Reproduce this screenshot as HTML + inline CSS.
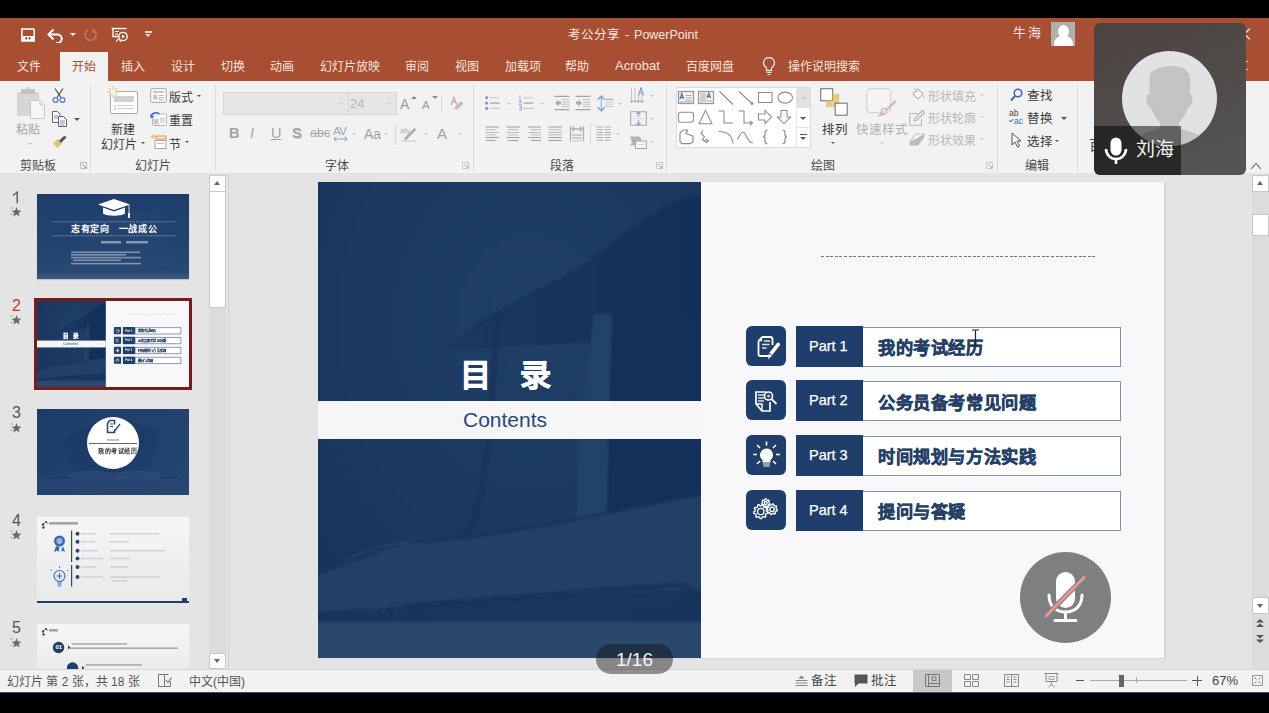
<!DOCTYPE html>
<html lang="zh-CN">
<head>
<meta charset="utf-8">
<style>
*{margin:0;padding:0;box-sizing:border-box}
html,body{width:1269px;height:713px;overflow:hidden;background:#000}
body{position:relative;font-family:"Liberation Sans",sans-serif;color:#333}
.a{position:absolute}
.t{position:absolute;white-space:nowrap;line-height:1}
/* title bar */
#title{left:0;top:18px;width:1269px;height:63px;background:#A84E33}
#ribbon{left:0;top:81px;width:1269px;height:92px;background:#F2F2F2}
#work{left:0;top:173px;width:1269px;height:496px;background:#E4E4E4}
#status{left:0;top:669px;width:1269px;height:24px;background:#F2F2F2;border-top:1px solid #D6D6D6;border-bottom:1px solid #2C5774}
.tab{color:#F4E4DE;font-size:12px}
.rl{color:#444;font-size:12px}
.sep{position:absolute;width:1px;background:#DADADA}
</style>
</head>
<body>
<div id="title" class="a"></div>
<div id="ribbon" class="a"></div>
<div id="work" class="a"></div>
<div id="status" class="a"></div>

<!-- active tab -->
<div class="a" style="left:60px;top:52px;width:48px;height:30px;background:#F2F2F2"></div>


<!-- QAT -->
<svg class="a" style="left:21px;top:28px" width="14" height="14" viewBox="0 0 14 14">
  <path d="M0.9 0.9h11.7l0.6 0.6v11.6h-12.3z" fill="none" stroke="#fff" stroke-width="1.5"/>
  <rect x="1.5" y="8" width="11.2" height="5" fill="#fff"/>
  <rect x="4.3" y="9.2" width="1.8" height="2.3" fill="#8A4030"/><rect x="7.6" y="9.2" width="1.8" height="2.3" fill="#8A4030"/>
</svg>
<svg class="a" style="left:47px;top:28px" width="18" height="15" viewBox="0 0 18 15">
  <path d="M2 6.5h8.5a4.2 4.2 0 0 1 0 8.4h-1.5" fill="none" stroke="#fff" stroke-width="2"/>
  <path d="M6.5 1.5L1.5 6.5L6.5 11.5" fill="none" stroke="#fff" stroke-width="2"/>
</svg>
<div class="a" style="left:70px;top:33px;width:0;height:0;border-left:3px solid transparent;border-right:3px solid transparent;border-top:3px solid #fff"></div>
<svg class="a" style="left:84px;top:28px" width="14" height="14" viewBox="0 0 14 14">
  <path d="M9.5 2.2A5.5 5.5 0 1 1 4 2" fill="none" stroke="#C77A63" stroke-width="1.5"/>
  <path d="M9 0.5v3.5h3.5" fill="none" stroke="#C77A63" stroke-width="1.5"/>
</svg>
<svg class="a" style="left:111px;top:27px" width="18" height="16" viewBox="0 0 18 16">
  <path d="M0.5 1.5h15" stroke="#fff" stroke-width="1.4"/>
  <path d="M2 1.5v8h6" fill="none" stroke="#fff" stroke-width="1.3"/>
  <path d="M4 4.5h4M4 7h3" stroke="#fff" stroke-width="1"/>
  <circle cx="12" cy="9.5" r="4.2" fill="none" stroke="#fff" stroke-width="1.3"/>
  <path d="M11 7.5v4l3-2z" fill="#fff"/>
  <path d="M5 15l2.5-3.5M10 15l-1.5-2" stroke="#fff" stroke-width="1.2"/>
</svg>
<div class="a" style="left:145px;top:31px;width:7px;height:1.5px;background:#F0D8D0"></div>
<div class="a" style="left:145px;top:34px;width:0;height:0;border-left:3.5px solid transparent;border-right:3.5px solid transparent;border-top:3.5px solid #F0D8D0"></div>

<div class="t" style="left:568px;top:29px;font-size:12.5px;color:#F5E6E0;word-spacing:-1px">考公分享&nbsp; -&nbsp; PowerPoint</div>
<div class="t" style="left:1013px;top:26px;font-size:13px;color:#F5E6E0;letter-spacing:2px">牛海</div>
<div class="a" style="left:1051px;top:22px;width:24px;height:24px;background:#AEB0B0;overflow:hidden">
  <div class="a" style="left:6.5px;top:3px;width:11px;height:13px;border-radius:50%;background:#fff"></div>
  <div class="a" style="left:2.5px;top:14px;width:19px;height:14px;border-radius:8px 8px 0 0;background:#fff"></div>
</div>

<!-- tabs -->
<div class="t tab" style="left:17px;top:61px">文件</div>
<div class="t" style="left:72px;top:61px;font-size:12px;color:#A84E33">开始</div>
<div class="t tab" style="left:121px;top:61px">插入</div>
<div class="t tab" style="left:171px;top:61px">设计</div>
<div class="t tab" style="left:221px;top:61px">切换</div>
<div class="t tab" style="left:270px;top:61px">动画</div>
<div class="t tab" style="left:320px;top:61px">幻灯片放映</div>
<div class="t tab" style="left:405px;top:61px">审阅</div>
<div class="t tab" style="left:455px;top:61px">视图</div>
<div class="t tab" style="left:505px;top:61px">加载项</div>
<div class="t tab" style="left:565px;top:61px">帮助</div>
<div class="t tab" style="left:615px;top:59px;font-size:13px">Acrobat</div>
<div class="t tab" style="left:686px;top:61px">百度网盘</div>
<svg class="a" style="left:762px;top:57px" width="14" height="19" viewBox="0 0 14 19">
  <path d="M4.5 13.5v-2.5C2.5 9.5 1.5 8 1.5 6a5.5 5.5 0 0 1 11 0c0 2-1 3.5-3 5v2.5z" fill="none" stroke="#F5E6E0" stroke-width="1.3"/>
  <path d="M4.5 15.5h5M5.5 17.5h3" stroke="#F5E6E0" stroke-width="1.2"/>
</svg>
<div class="t tab" style="left:788px;top:61px">操作说明搜索</div>


<!-- ===== RIBBON group 1: clipboard ===== -->
<div class="a" style="left:17px;top:92px;width:22px;height:24px;background:#D6D6D6;border-radius:1px"></div>
<div class="a" style="left:21px;top:89px;width:14px;height:5px;background:#C4C4C4;border-radius:1px"></div>
<div class="a" style="left:26px;top:87px;width:4px;height:4px;border:1.3px solid #C4C4C4;border-radius:50%"></div>
<svg class="a" style="left:30px;top:100px" width="15" height="19" viewBox="0 0 15 19">
  <path d="M0.5 0.5h9.5l4.5 4.5v13.5h-14z" fill="#F8F6F8" stroke="#C9C9C9" stroke-width="1"/>
  <path d="M10 0.5v4.5h4.5" fill="none" stroke="#C9C9C9" stroke-width="1"/>
</svg>
<div class="t rl" style="left:16px;top:123.5px;color:#A6A6A6">粘贴</div>
<div class="a" style="left:28px;top:143px;width:0;height:0;border-left:2.5px solid transparent;border-right:2.5px solid transparent;border-top:2.5px solid #B8B8B8"></div>
<svg class="a" style="left:52px;top:88px" width="14" height="15" viewBox="0 0 14 15">
  <path d="M3 0.5L9 9.5M11 0.5L5 9.5" stroke="#555" stroke-width="1.3"/>
  <circle cx="3.5" cy="12" r="2.4" fill="none" stroke="#5B83C4" stroke-width="1.4"/>
  <circle cx="10.5" cy="12" r="2.4" fill="none" stroke="#5B83C4" stroke-width="1.4"/>
</svg>
<svg class="a" style="left:52px;top:111px" width="15" height="16" viewBox="0 0 15 16">
  <path d="M0.5 0.5h5l2.5 2.5v8.5h-7.5z" fill="#fff" stroke="#666" stroke-width="1"/>
  <path d="M2 5h4M2 7h4" stroke="#5B83C4" stroke-width="0.9"/>
  <path d="M6.5 5.5h5l3 3v7h-8z" fill="#fff" stroke="#666" stroke-width="1"/>
  <path d="M8 10h5M8 12h5M8 14h4" stroke="#5B83C4" stroke-width="0.9"/>
</svg>
<div class="a" style="left:74px;top:118px;width:0;height:0;border-left:3px solid transparent;border-right:3px solid transparent;border-top:3px solid #555"></div>
<svg class="a" style="left:52px;top:135px" width="15" height="14" viewBox="0 0 15 14">
  <path d="M1 8.5L5.5 4L10 8.5L5.5 13z" fill="#E2C27F"/>
  <path d="M7 5.5L12.5 0.5L14.5 2.5L9 8" fill="#585858"/>
</svg>
<div class="t rl" style="left:20px;top:160px;color:#4A4A4A">剪贴板</div>
<svg class="a" style="left:80px;top:162px" width="7" height="7" viewBox="0 0 7 7"><path d="M0.5 0.5h6v6h-6z" fill="none" stroke="#B0B0B0" stroke-width="0.8"/><path d="M2 2l4 4M4 6h2v-2" fill="none" stroke="#999" stroke-width="0.8"/></svg>
<div class="sep" style="left:90px;top:85px;height:86px"></div>

<!-- ===== group 2: slides ===== -->
<div class="a" style="left:110px;top:91px;width:28px;height:23px;background:#fff;border:1.2px solid #A8A8A8;border-radius:2px"></div>
<div class="a" style="left:114px;top:96px;width:20px;height:6px;background:#D0D0D0"></div>
<div class="a" style="left:117px;top:105px;width:17px;height:1.2px;background:#D0D0D0"></div>
<div class="a" style="left:117px;top:108px;width:17px;height:1.2px;background:#D0D0D0"></div>
<div class="a" style="left:114px;top:105px;width:1.5px;height:1.5px;background:#D0D0D0"></div>
<div class="a" style="left:114px;top:108px;width:1.5px;height:1.5px;background:#D0D0D0"></div>
<svg class="a" style="left:107px;top:86px" width="12" height="12" viewBox="0 0 12 12">
  <path d="M6 0v12M0 6h12M1.8 1.8l8.4 8.4M10.2 1.8L1.8 10.2" stroke="#E8C67A" stroke-width="1.2"/>
  <circle cx="6" cy="6" r="2.5" fill="#F2F2F2"/>
</svg>
<div class="t rl" style="left:111px;top:123.5px;color:#3A3A3A">新建</div>
<div class="t rl" style="left:101px;top:138.5px;color:#3A3A3A">幻灯片</div>
<div class="a" style="left:141px;top:142px;width:0;height:0;border-left:2.5px solid transparent;border-right:2.5px solid transparent;border-top:2.5px solid #555"></div>

<svg class="a" style="left:150px;top:88px" width="17" height="15" viewBox="0 0 17 15">
  <rect x="0.7" y="0.7" width="15.6" height="13.6" rx="1.5" fill="#fff" stroke="#B4B4B4" stroke-width="1.2"/>
  <rect x="3" y="3" width="11" height="2" fill="#C8C8C8"/>
  <rect x="3" y="6.5" width="4.5" height="5" fill="#C8C8C8"/>
  <path d="M9 7.5h5M9 9.5h5M9 11.5h4" stroke="#B0B0B0" stroke-width="0.9"/>
</svg>
<div class="t rl" style="left:169px;top:91.5px;color:#3A3A3A">版式</div>
<div class="a" style="left:197px;top:95px;width:0;height:0;border-left:2.5px solid transparent;border-right:2.5px solid transparent;border-top:2.5px solid #555"></div>
<svg class="a" style="left:150px;top:111px" width="17" height="15" viewBox="0 0 17 15">
  <rect x="2.5" y="3" width="14" height="11.5" rx="1" fill="#fff" stroke="#B4B4B4" stroke-width="1"/>
  <rect x="3.5" y="8" width="5" height="5.5" fill="#C8C8C8"/>
  <path d="M10 7h5M10 9h5M10 11h5" stroke="#B0B0B0" stroke-width="0.9"/>
  <path d="M1 6.5A5 5 0 0 1 9.5 3" fill="none" stroke="#3E7BC8" stroke-width="1.6"/>
  <path d="M0 3.5L1.2 7.5L4.5 5.5z" fill="#3E7BC8"/>
</svg>
<div class="t rl" style="left:169px;top:114.5px;color:#3A3A3A">重置</div>
<svg class="a" style="left:150px;top:134px" width="17" height="15" viewBox="0 0 17 15">
  <path d="M3 0v5M0.5 2.5h5M1.2 0.7l3.6 3.6M4.8 0.7L1.2 4.3" stroke="#E8C67A" stroke-width="1"/>
  <rect x="6" y="2" width="10" height="3" fill="none" stroke="#E09A50" stroke-width="1.1"/>
  <rect x="5" y="6.5" width="11" height="8" fill="#fff" stroke="#A8A8A8" stroke-width="1"/>
  <path d="M7 9.5h7" stroke="#C0C0C0" stroke-width="1"/>
</svg>
<div class="t rl" style="left:169px;top:138.5px;color:#3A3A3A">节</div>
<div class="a" style="left:185px;top:141px;width:0;height:0;border-left:2.5px solid transparent;border-right:2.5px solid transparent;border-top:2.5px solid #555"></div>
<div class="t rl" style="left:135px;top:160px;color:#4A4A4A">幻灯片</div>
<div class="sep" style="left:215px;top:85px;height:86px"></div>


<!-- ===== group 3: font ===== -->
<div class="a" style="left:223px;top:92px;width:126px;height:23px;background:#E6E6E6;border:1px solid #D6D6D6"></div>
<div class="a" style="left:348px;top:92px;width:49px;height:23px;background:#E6E6E6;border:1px solid #D6D6D6"></div>
<div class="a" style="left:339px;top:103px;width:0;height:0;border-left:2.5px solid transparent;border-right:2.5px solid transparent;border-top:2.5px solid #C4C4C4"></div>
<div class="a" style="left:387px;top:103px;width:0;height:0;border-left:2.5px solid transparent;border-right:2.5px solid transparent;border-top:2.5px solid #C4C4C4"></div>
<div class="t" style="left:350px;top:97px;font-size:13px;color:#B8B8B8">24</div>
<div class="t" style="left:400px;top:97px;font-size:14px;color:#9C9C9C">A</div>
<div class="a" style="left:411px;top:96px;width:0;height:0;border-left:3px solid transparent;border-right:3px solid transparent;border-bottom:3px solid #6A8FC8"></div>
<div class="t" style="left:422px;top:100px;font-size:11.5px;color:#9C9C9C">A</div>
<div class="a" style="left:432px;top:96px;width:0;height:0;border-left:3px solid transparent;border-right:3px solid transparent;border-top:3px solid #6A8FC8"></div>
<div class="sep" style="left:441px;top:94px;height:20px;background:#D8D8D8"></div>
<svg class="a" style="left:450px;top:96px" width="14" height="14" viewBox="0 0 14 14">
  <path d="M1 9L4 1.5L7 9M2.2 6h3.6" fill="none" stroke="#D89A9A" stroke-width="1.1"/>
  <path d="M5 11l6-6l2.5 2.5l-6 6z" fill="#BEBEBE"/>
  <path d="M3.5 12.5l1.5-1.5l2.5 2.5h-3z" fill="#E8B8B8"/>
</svg>
<div class="t" style="left:229px;top:126px;font-size:14.5px;font-weight:bold;color:#A2A2A2">B</div>
<div class="t" style="left:250px;top:126px;font-size:14.5px;font-style:italic;color:#A2A2A2">I</div>
<div class="t" style="left:271px;top:126px;font-size:14.5px;color:#A2A2A2;text-decoration:underline">U</div>
<div class="t" style="left:292px;top:126px;font-size:14.5px;font-weight:bold;color:#A2A2A2;text-shadow:1px 1px 0 #D0D0D0">S</div>
<div class="t" style="left:310px;top:127px;font-size:12.5px;color:#A8A8A8;text-decoration:line-through">abc</div>
<div class="t" style="left:333px;top:126px;font-size:11.5px;color:#A2A2A2;letter-spacing:-0.5px">AV</div>
<svg class="a" style="left:333px;top:136px" width="15" height="6" viewBox="0 0 15 6"><path d="M1 3h13M3.5 0.8L1 3l2.5 2.2M11.5 0.8L14 3l-2.5 2.2" fill="none" stroke="#7FA0D0" stroke-width="1"/></svg>
<div class="a" style="left:352px;top:133px;width:0;height:0;border-left:2.5px solid transparent;border-right:2.5px solid transparent;border-top:2.5px solid #C4C4C4"></div>
<div class="t" style="left:364px;top:127px;font-size:14px;color:#A2A2A2">Aa</div>
<div class="a" style="left:384px;top:133px;width:0;height:0;border-left:2.5px solid transparent;border-right:2.5px solid transparent;border-top:2.5px solid #C4C4C4"></div>
<div class="sep" style="left:395px;top:125px;height:20px;background:#D8D8D8"></div>
<svg class="a" style="left:400px;top:126px" width="18" height="16" viewBox="0 0 18 16">
  <text x="0" y="7" font-size="8" font-family="Liberation Sans" fill="#B0B0B0">aly</text>
  <path d="M4 12.5L14.5 2l1.8 1.8L5.8 14.3z" fill="#A8A8A8"/>
  <path d="M1 15h15" stroke="#E8C0D0" stroke-width="1.3"/>
</svg>
<div class="a" style="left:424px;top:133px;width:0;height:0;border-left:2.5px solid transparent;border-right:2.5px solid transparent;border-top:2.5px solid #C4C4C4"></div>
<div class="t" style="left:437px;top:126px;font-size:15px;color:#A8A0A0">A</div>
<div class="a" style="left:458px;top:133px;width:0;height:0;border-left:2.5px solid transparent;border-right:2.5px solid transparent;border-top:2.5px solid #C4C4C4"></div>
<div class="t rl" style="left:325px;top:160px;color:#4A4A4A">字体</div>
<svg class="a" style="left:462px;top:162px" width="7" height="7" viewBox="0 0 7 7"><path d="M0.5 0.5h6v6h-6z" fill="none" stroke="#C0C0C0" stroke-width="0.8"/><path d="M2 2l4 4M4 6h2v-2" fill="none" stroke="#AAA" stroke-width="0.8"/></svg>
<div class="sep" style="left:473px;top:85px;height:86px"></div>

<!-- ===== group 4: paragraph ===== -->
<svg class="a" style="left:484px;top:95px" width="17" height="16" viewBox="0 0 17 16">
<circle cx="2.7" cy="2.7" r="1.6" fill="#7E9CCB"/><circle cx="2.7" cy="8.1" r="1.6" fill="#7E9CCB"/><circle cx="2.7" cy="13.4" r="1.6" fill="#7E9CCB"/>
<path d="M6 2.7h9.6M6 13.4h9.6" stroke="#C8C8C8" stroke-width="1.1"/><path d="M6 8.1h9.6" stroke="#A8A8A8" stroke-width="1.3"/></svg>
<div class="a" style="left:507px;top:103px;width:0;height:0;border-left:2.5px solid transparent;border-right:2.5px solid transparent;border-top:2.5px solid #C4C4C4"></div>
<svg class="a" style="left:518px;top:95px" width="17" height="16" viewBox="0 0 17 16">
<path d="M2 0.5v4M1 5h2M1 6.5h2.5l-2.5 3h2.5M1 11h2.5v4h-2.5M1.5 13h2" fill="none" stroke="#8FA8D0" stroke-width="0.9"/>
<path d="M5.5 2.7h10M5.5 13.4h10" stroke="#C8C8C8" stroke-width="1.1"/><path d="M5.5 8.1h10" stroke="#A8A8A8" stroke-width="1.3"/></svg>
<div class="a" style="left:540px;top:103px;width:0;height:0;border-left:2.5px solid transparent;border-right:2.5px solid transparent;border-top:2.5px solid #C4C4C4"></div>
<svg class="a" style="left:554px;top:95px" width="16" height="16" viewBox="0 0 16 16">
<path d="M0.5 1.4h15M0.5 14.6h15" stroke="#A4A4A4" stroke-width="1.2"/><path d="M8 4.4h7.5M8 6.9h7.5M8 9.2h7.5M8 11.6h7.5" stroke="#C0C0C0" stroke-width="1"/>
<path d="M1 8L4.5 4.5v2h2.5v3h-2.5v2z" fill="#ACACAC"/></svg>
<svg class="a" style="left:575px;top:95px" width="16" height="16" viewBox="0 0 16 16">
<path d="M0.5 1.4h15M0.5 14.6h15" stroke="#A4A4A4" stroke-width="1.2"/><path d="M8 4.4h7.5M8 6.9h7.5M8 9.2h7.5M8 11.6h7.5" stroke="#C0C0C0" stroke-width="1"/>
<path d="M7 8L3.5 4.5v2h-2.5v3h2.5v2z" fill="#ACACAC"/></svg>
<svg class="a" style="left:597px;top:95px" width="17" height="17" viewBox="0 0 17 17">
<path d="M4.3 2v13" stroke="#9AB0D5" stroke-width="1.2"/><path d="M0.8 4.8L4.3 1.2L7.8 4.8M0.8 12.2L4.3 15.8L7.8 12.2" fill="none" stroke="#8EA6D0" stroke-width="1.6"/>
<path d="M8.3 4.3h8.3" stroke="#A4A4A4" stroke-width="1.1"/><path d="M8.3 7h8.3M8.3 9.2h8.3M8.3 11.6h8.3" stroke="#C8C8C8" stroke-width="1"/></svg>
<div class="a" style="left:618px;top:103px;width:0;height:0;border-left:2.5px solid transparent;border-right:2.5px solid transparent;border-top:2.5px solid #C4C4C4"></div>
<svg class="a" style="left:630px;top:87px" width="17" height="17" viewBox="0 0 17 17">
<path d="M1.5 1v14M5 1v14M8.5 8v7M12 8v7" stroke="#C4C4C4" stroke-width="1"/>
<path d="M0 13.5l1.5 2l1.5-2M3.5 13.5l1.5 2l1.5-2M7 13.5l1.5 2l1.5-2M10.5 13.5l1.5 2l1.5-2" fill="none" stroke="#9A9A9A" stroke-width="1"/>
<path d="M8.5 8.5L11 0.8L13.5 8.5M9.3 6h3.4" fill="none" stroke="#7E9CCB" stroke-width="1.2"/></svg>
<div class="a" style="left:650px;top:95px;width:0;height:0;border-left:2.5px solid transparent;border-right:2.5px solid transparent;border-top:2.5px solid #C4C4C4"></div>
<svg class="a" style="left:630px;top:111px" width="17" height="15" viewBox="0 0 17 15">
<path d="M0.7 0.7h15.6v13.6h-15.6z" fill="none" stroke="#A8A8A8" stroke-width="1.1"/>
<path d="M3 7.5h11" stroke="#E8C4C4" stroke-width="0.8"/>
<path d="M8.5 1v5M6.5 3l2-2l2 2M8.5 14v-5M6.5 12l2 2l2-2" fill="none" stroke="#8EA6D0" stroke-width="1.2"/></svg>
<div class="a" style="left:650px;top:118px;width:0;height:0;border-left:2.5px solid transparent;border-right:2.5px solid transparent;border-top:2.5px solid #C4C4C4"></div>
<svg class="a" style="left:630px;top:136px" width="17" height="13" viewBox="0 0 17 13">
<path d="M0 0.5h9.5l2 3l-2 3l2 3h-11.5l2-3z" fill="#B4B4B4"/>
<rect x="5.5" y="5" width="11" height="7.5" fill="#F4F4F4" stroke="#A8A8A8" stroke-width="1"/>
<path d="M7.5 8.5h7" stroke="#E8C4C4" stroke-width="0.8"/></svg>
<div class="a" style="left:650px;top:141px;width:0;height:0;border-left:2.5px solid transparent;border-right:2.5px solid transparent;border-top:2.5px solid #C4C4C4"></div>
<svg class="a" style="left:485px;top:126px" width="15" height="16" viewBox="0 0 15 16"><path d="M0.5 1h13.5" stroke="#A4A4A4" stroke-width="1.1"/><path d="M0.5 3.7h10" stroke="#C0C0C0" stroke-width="1.1"/><path d="M0.5 6.5h13.5" stroke="#C0C0C0" stroke-width="1.1"/><path d="M0.5 8.8h10" stroke="#C0C0C0" stroke-width="1.1"/><path d="M0.5 11.5h13.5" stroke="#A4A4A4" stroke-width="1.1"/><path d="M0.5 14.5h10" stroke="#A4A4A4" stroke-width="1.1"/></svg>
<svg class="a" style="left:506px;top:126px" width="15" height="16" viewBox="0 0 15 16"><path d="M0.25 1h13.5" stroke="#A4A4A4" stroke-width="1.1"/><path d="M2.0 3.7h10" stroke="#C0C0C0" stroke-width="1.1"/><path d="M0.25 6.5h13.5" stroke="#C0C0C0" stroke-width="1.1"/><path d="M2.0 8.8h10" stroke="#C0C0C0" stroke-width="1.1"/><path d="M0.25 11.5h13.5" stroke="#A4A4A4" stroke-width="1.1"/><path d="M2.0 14.5h10" stroke="#A4A4A4" stroke-width="1.1"/></svg>
<svg class="a" style="left:527px;top:126px" width="15" height="16" viewBox="0 0 15 16"><path d="M0.5 1h13.5" stroke="#A4A4A4" stroke-width="1.1"/><path d="M4 3.7h10" stroke="#C0C0C0" stroke-width="1.1"/><path d="M0.5 6.5h13.5" stroke="#C0C0C0" stroke-width="1.1"/><path d="M4 8.8h10" stroke="#C0C0C0" stroke-width="1.1"/><path d="M0.5 11.5h13.5" stroke="#A4A4A4" stroke-width="1.1"/><path d="M4 14.5h10" stroke="#A4A4A4" stroke-width="1.1"/></svg>
<svg class="a" style="left:548px;top:126px" width="15" height="16" viewBox="0 0 15 16"><path d="M0.5 1h13.5" stroke="#A4A4A4" stroke-width="1.1"/><path d="M0.5 3.7h13.5" stroke="#C0C0C0" stroke-width="1.1"/><path d="M0.5 6.5h13.5" stroke="#C0C0C0" stroke-width="1.1"/><path d="M0.5 8.8h13.5" stroke="#C0C0C0" stroke-width="1.1"/><path d="M0.5 11.5h13.5" stroke="#A4A4A4" stroke-width="1.1"/><path d="M0.5 14.5h13.5" stroke="#A4A4A4" stroke-width="1.1"/></svg>
<svg class="a" style="left:569px;top:126px" width="16" height="16" viewBox="0 0 16 16">
<path d="M1.5 0v15.5M14.5 0v15.5" stroke="#9AB0D5" stroke-width="1.2"/>
<path d="M3 3h10M5 0.8L3 3l2 2.2M11 0.8L13 3l-2 2.2" fill="none" stroke="#B0B0B0" stroke-width="1.4"/>
<path d="M3 9h10M3 12h10" stroke="#A4A4A4" stroke-width="1.1"/><path d="M3 15h10" stroke="#C8C8C8" stroke-width="1"/></svg>
<div class="sep" style="left:590px;top:124px;height:21px;background:#D8D8D8"></div>
<svg class="a" style="left:596px;top:126px" width="16" height="15" viewBox="0 0 16 15">
<path d="M0.5 1h6.5M8.5 1h6.5M0.5 3.7h6.5M8.5 3.7h6.5M0.5 6.5h6.5M8.5 6.5h6.5M0.5 8.8h6.5M8.5 8.8h6.5M0.5 11.5h6.5M8.5 11.5h6.5M0.5 14.2h6.5M8.5 14.2h6.5" stroke="#B0B0B0" stroke-width="1.1"/></svg>
<div class="a" style="left:616px;top:133px;width:0;height:0;border-left:2.5px solid transparent;border-right:2.5px solid transparent;border-top:2.5px solid #C4C4C4"></div>
<div class="t rl" style="left:550px;top:160px;color:#4A4A4A">段落</div>
<svg class="a" style="left:656px;top:162px" width="7" height="7" viewBox="0 0 7 7"><path d="M0.5 0.5h6v6h-6z" fill="none" stroke="#C0C0C0" stroke-width="0.8"/><path d="M2 2l4 4M4 6h2v-2" fill="none" stroke="#AAA" stroke-width="0.8"/></svg>
<div class="sep" style="left:666px;top:85px;height:86px"></div>

<!-- ===== group 5: drawing ===== -->
<div class="a" style="left:676px;top:87px;width:135px;height:61px;background:#fff;border:1px solid #DCDCDC"></div>
<div class="a" style="left:796px;top:88px;width:14px;height:20px;background:#E2E2E2"></div>
<div class="a" style="left:796px;top:88px;width:1px;height:59px;background:#E4E4E4"></div>
<div class="a" style="left:796px;top:127px;width:14px;height:1px;background:#E4E4E4"></div>
<div class="a" style="left:801px;top:96px;width:0;height:0;border-left:3px solid transparent;border-right:3px solid transparent;border-bottom:3px solid #C8C8C8"></div>
<div class="a" style="left:800px;top:117px;width:0;height:0;border-left:3.5px solid transparent;border-right:3.5px solid transparent;border-top:3.5px solid #555"></div>
<div class="a" style="left:800px;top:134px;width:7px;height:1.3px;background:#555"></div>
<div class="a" style="left:800px;top:137px;width:0;height:0;border-left:3.5px solid transparent;border-right:3.5px solid transparent;border-top:3.5px solid #555"></div>
<svg class="a" style="left:676px;top:87px" width="120" height="61" viewBox="676 87 120 61">
 <g fill="none" stroke="#8C8C8C" stroke-width="1.05">
  <rect x="678.5" y="91.5" width="15" height="12" fill="#F4F4F4" stroke="#999" stroke-width="1.3"/>
  <path d="M685.5 95.5h6M685.5 97.8h6M685.5 100h6M680 101.8h12" stroke="#9A9A9A" stroke-width="0.8"/>
  <path d="M680 99l1.8-5.5l1.8 5.5M680.8 97.3h2" stroke="#4A74C0" stroke-width="1.2"/>
  <rect x="698.5" y="91.5" width="15" height="12" fill="#F4F4F4" stroke="#999" stroke-width="1.3"/>
  <path d="M701 93v9M703 93v9M705 93v9" stroke="#9A9A9A" stroke-width="0.8"/>
  <path d="M707 98l1.8-5l1.8 5M707.8 96.5h2" stroke="#4A74C0" stroke-width="1.2"/>
  <path d="M707 100v2M709 100v2M711 100v2" stroke="#9A9A9A" stroke-width="0.8"/>
  <path d="M719.5 91.5L733 104.5"/>
  <path d="M739 91.5L752.5 104"/><circle cx="752" cy="103.5" r="0.9" fill="#8C8C8C"/>
  <rect x="758.5" y="92.5" width="13.5" height="10"/>
  <ellipse cx="785.2" cy="97.6" rx="7.3" ry="5.5"/>
  <rect x="678.5" y="112.2" width="15" height="10" rx="2.5"/>
  <path d="M705.5 110.5L712 123.7H699z"/>
  <path d="M718.5 111h5.5v12h9"/>
  <path d="M738.5 111h5.5v12h8.5M750 121l2.5 2l-2.5 2"/>
  <path d="M758.5 114h6.5v-3.5l6.5 6.5l-6.5 6.5v-3.5h-6.5z"/>
  <path d="M781 110.5h6v6.5h3.5l-6.5 6.8l-6.5-6.8h3.5z"/>
  <path d="M680 133l3-3h4.5l-1.5 3.5l3.5 1.2l3.5 1.5v5.5l-2.5 2h-8.5l-2-2z" stroke-width="1.2"/>
  <path d="M703 130.5l-2 3l3.5 3l-2 3l4 3l2-1.5l-1.5-1.5l-2 1" stroke-width="1.1"/>
  <path d="M718.5 131.5c6 0 13.5 2 14.5 12"/>
  <path d="M737.5 139.5c2-4 3.5-7.5 5.5-7.5c3 0 4 10.5 10 11"/>
  <path d="M767.5 130c-2 0-2.5 1-2.5 3v2.5l-1.5 1.3l1.5 1.3v3c0 1.8 0.5 2.7 2.5 2.7" stroke-width="1.2"/>
  <path d="M782.5 130c2 0 2.5 1 2.5 3v2.5l1.5 1.3l-1.5 1.3v3c0 1.8-0.5 2.7-2.5 2.7" stroke-width="1.2"/>
 </g>
</svg>
<!-- arrange -->
<svg class="a" style="left:820px;top:88px" width="29" height="28" viewBox="0 0 29 28">
  <rect x="0.7" y="0.7" width="12" height="12" fill="#fff" stroke="#777" stroke-width="1.1"/>
  <rect x="12.7" y="6" width="6.5" height="6.5" fill="#EAC77A"/>
  <rect x="6" y="12.7" width="6.5" height="6.5" fill="#EAC77A"/>
  <rect x="12.7" y="12.7" width="6.5" height="6.5" fill="#EAC77A"/>
  <rect x="15.2" y="15.2" width="12" height="12" fill="#fff" stroke="#777" stroke-width="1.1"/>
</svg>
<div class="t" style="left:822px;top:123.5px;font-size:12.5px;color:#3A3A3A">排列</div>
<div class="a" style="left:831px;top:142px;width:0;height:0;border-left:2.5px solid transparent;border-right:2.5px solid transparent;border-top:2.5px solid #555"></div>
<!-- quick styles -->
<svg class="a" style="left:866px;top:88px" width="31" height="30" viewBox="0 0 31 30">
  <rect x="0.7" y="0.7" width="24" height="24" rx="4" fill="#F6F4F6" stroke="#D4D4D4" stroke-width="1.2"/>
  <path d="M11 29l5-6l4-2l9-9l1.5 1.5l-9 9l-2 4z" fill="#BDBDBD"/>
  <circle cx="18" cy="23" r="3" fill="#F0D8DC" stroke="#D8A8B0" stroke-width="0.8"/>
</svg>
<div class="t" style="left:856px;top:123.5px;font-size:12.5px;color:#B0B0B0">快速样式</div>
<div class="a" style="left:880px;top:142px;width:0;height:0;border-left:2.5px solid transparent;border-right:2.5px solid transparent;border-top:2.5px solid #C8C8C8"></div>
<!-- shape fill/outline/effects -->
<svg class="a" style="left:911px;top:87px" width="14" height="14" viewBox="0 0 14 14">
  <path d="M2 7l5-5l5 5l-5 5z" fill="#fff" stroke="#B8B8B8" stroke-width="1.1"/><path d="M4 1c0 2 1 3 3 4" fill="none" stroke="#B8B8B8" stroke-width="1"/>
  <path d="M12 8c1 1.5 1.5 2.5 1 3.5" stroke="#C8C8C8" stroke-width="1.2" fill="none"/>
</svg>
<div class="t" style="left:928px;top:90.5px;font-size:12px;color:#B8B8B8">形状填充</div>
<div class="a" style="left:980px;top:94px;width:0;height:0;border-left:2.5px solid transparent;border-right:2.5px solid transparent;border-top:2.5px solid #C8C8C8"></div>
<svg class="a" style="left:909px;top:110px" width="16" height="16" viewBox="0 0 16 16">
  <path d="M0.7 3.5h8M0.7 3.5v11.8h11.8v-6" fill="none" stroke="#B8B8B8" stroke-width="1.1"/>
  <path d="M5 11l1-3l7.5-7.5l2 2l-7.5 7.5z" fill="none" stroke="#B0B0B0" stroke-width="1.1"/>
</svg>
<div class="t" style="left:928px;top:112.5px;font-size:12px;color:#B8B8B8">形状轮廓</div>
<div class="a" style="left:980px;top:116px;width:0;height:0;border-left:2.5px solid transparent;border-right:2.5px solid transparent;border-top:2.5px solid #C8C8C8"></div>
<svg class="a" style="left:909px;top:133px" width="16" height="14" viewBox="0 0 16 14">
  <path d="M1 9l6-8h8l-6 8z" fill="#fff" stroke="#C0C0C0" stroke-width="1.1"/>
  <path d="M1 9v3h8l6-8v-3" fill="#BDBDBD" stroke="#B8B8B8" stroke-width="1"/>
</svg>
<div class="t" style="left:928px;top:134.5px;font-size:12px;color:#B8B8B8">形状效果</div>
<div class="a" style="left:980px;top:138px;width:0;height:0;border-left:2.5px solid transparent;border-right:2.5px solid transparent;border-top:2.5px solid #C8C8C8"></div>
<div class="t rl" style="left:811px;top:160px;color:#4A4A4A">绘图</div>
<svg class="a" style="left:986px;top:162px" width="7" height="7" viewBox="0 0 7 7"><path d="M0.5 0.5h6v6h-6z" fill="none" stroke="#C0C0C0" stroke-width="0.8"/><path d="M2 2l4 4M4 6h2v-2" fill="none" stroke="#AAA" stroke-width="0.8"/></svg>
<div class="sep" style="left:997px;top:85px;height:86px"></div>

<!-- ===== group 6: editing ===== -->
<svg class="a" style="left:1010px;top:88px" width="13" height="14" viewBox="0 0 13 14">
  <circle cx="8" cy="5" r="3.8" fill="none" stroke="#3E6CB8" stroke-width="1.6"/><path d="M5.2 7.8L1 12.5" stroke="#3E6CB8" stroke-width="2"/>
</svg>
<div class="t" style="left:1027px;top:89.5px;font-size:12.5px;color:#3A3A3A">查找</div>
<svg class="a" style="left:1008px;top:108px" width="17" height="17" viewBox="0 0 17 17">
  <text x="1" y="7.5" font-size="8.5" font-family="Liberation Sans" fill="#444">ab</text>
  <text x="6" y="15.5" font-size="8.5" font-family="Liberation Sans" fill="#3E6CB8">ac</text>
  <path d="M1.5 12l1.5 2l2-3" fill="none" stroke="#3E6CB8" stroke-width="1"/>
</svg>
<div class="t" style="left:1027px;top:112.5px;font-size:12.5px;color:#3A3A3A">替换</div>
<div class="a" style="left:1061px;top:117px;width:0;height:0;border-left:3px solid transparent;border-right:3px solid transparent;border-top:3px solid #555"></div>
<svg class="a" style="left:1011px;top:132px" width="12" height="16" viewBox="0 0 12 16">
  <path d="M1 1v12l3-3l2.5 5l2-1l-2.5-5h4z" fill="#fff" stroke="#555" stroke-width="1"/>
</svg>
<div class="t" style="left:1027px;top:135.5px;font-size:12.5px;color:#3A3A3A">选择</div>
<div class="a" style="left:1055px;top:140px;width:0;height:0;border-left:2.5px solid transparent;border-right:2.5px solid transparent;border-top:2.5px solid #555"></div>
<div class="t rl" style="left:1025px;top:160px;color:#4A4A4A">编辑</div>
<div class="sep" style="left:1077px;top:85px;height:86px"></div>
<div class="t" style="left:1089px;top:137.5px;font-size:14px;color:#444">百</div>

<!-- window controls behind overlay -->
<svg class="a" style="left:1236px;top:28px" width="16" height="12" viewBox="0 0 16 12"><path d="M3 0.5L14 11.5M14 0.5L3 11.5" stroke="#F5E6E0" stroke-width="1.1"/></svg>
<div class="a" style="left:1240px;top:61px;width:8px;height:1px;background:#F0D8D0"></div>
<div class="a" style="left:1240px;top:69px;width:8px;height:1px;background:#F0D8D0"></div>
<svg class="a" style="left:1250px;top:162px" width="12" height="8" viewBox="0 0 12 8"><path d="M1 7L6 1.5L11 7" fill="none" stroke="#666" stroke-width="1.1"/></svg>

<!-- ===== video overlay ===== -->
<div class="a" style="left:1094px;top:23px;width:152px;height:152px;border-radius:6px;overflow:hidden;background:linear-gradient(160deg,#4C4240 0%,#4F4A48 40%,#555555 100%)">
  <div class="a" style="left:28px;top:28px;width:95px;height:95px;border-radius:50%;background:#E2E2E2;overflow:hidden">
    <svg class="a" style="left:0;top:0" width="95" height="95" viewBox="0 0 95 95">
      <path d="M27.5 30 C27 23 29 20 33 19 C37 16 44 15 50 15 C58 15 64 17 67 23 C69 28 68.5 36 67.5 43 C70 43 71 45 70.5 49 C70 53 68 56 66 57 C64 63 60 68 57 72 V77 C65 80 80 84 88 90 L95 98 H0 L7 90 C15 84 30 80 38 77 V72 C35 68 31 63 29 57 C27 56 25 53 24.5 49 C24 45 25 43 27.5 43 Z" fill="#C3C3C3"/>
    </svg>
  </div>
  <div class="a" style="left:0;top:103px;width:87px;height:49px;background:rgba(0,0,0,0.5)"></div>
  <svg class="a" style="left:10px;top:114px" width="24" height="27" viewBox="0 0 24 27">
    <rect x="6.5" y="0.5" width="11" height="18" rx="5.5" fill="#fff"/>
    <path d="M2 12a10 10 0 0 0 20 0" fill="none" stroke="#fff" stroke-width="2.6"/>
    <path d="M12 22v5" stroke="#fff" stroke-width="2.6"/>
  </svg>
  <div class="t" style="left:42px;top:117px;font-size:19px;color:#F2F2F2">刘海</div>
</div>

<!-- slide -->
<div id="slideshadow" class="a" style="left:318px;top:182px;width:848px;height:477px;background:#D9D9DB"></div>
<div id="slide" class="a" style="left:318px;top:182px;width:846px;height:476px;background:#F8F7F9;overflow:hidden">
  <div class="a" style="left:0;top:0;width:383px;height:476px;overflow:hidden"><svg class="a" style="left:-6px;top:-6px;filter:blur(1.2px)" width="395" height="488" viewBox="312 176 395 488">
    <defs>
      <radialGradient id="bg1" cx="0.55" cy="0.3" r="0.8">
        <stop offset="0" stop-color="#203F67"/><stop offset="1" stop-color="#16335B"/>
      </radialGradient>
      <linearGradient id="capg" x1="0" y1="0" x2="1" y2="0">
        <stop offset="0" stop-color="#1B3863"/><stop offset="1" stop-color="#122F59"/>
      </linearGradient>
      <filter id="bl" x="-5%" y="-5%" width="110%" height="110%"><feGaussianBlur stdDeviation="1.5"/></filter>
    </defs>
    <rect x="312" y="176" width="395" height="488" fill="url(#bg1)"/>
    <g>
    <!-- board surface -->
    <path d="M447 349 C470 330 485 318 497 313 C520 300 545 285 565 277 C590 262 610 245 626 233 C650 217 670 203 685 199 L705 197 L705 345 L596 342 L447 350 Z" fill="url(#capg)"/>
    <path d="M447 349 C470 330 485 318 497 313 C520 300 545 285 565 277 C590 262 610 245 626 233 C650 217 670 203 685 199 L702 197" stroke="#16305B" stroke-width="2" fill="none" opacity="0.7"/>
    <!-- cap body -->
    <path d="M596 314 L706 314 L706 544 L578 544 L580 440 Z" fill="#13305A"/>
    <path d="M594 314 L612 314 L606 544 L576 544 L578 440 Z" fill="#21406A"/>
    <!-- tassel -->
    <path d="M497 314 C494 380 490 440 482 490 C476 520 466 538 450 548" stroke="#17325D" stroke-width="7" fill="none" opacity="0.75"/>
    <path d="M455 545 C420 550 380 560 340 590" stroke="#3B5A84" stroke-width="14" fill="none" opacity="0.2"/><path d="M424.2 547.1 Q371.8 554.9 339.4 592.7" stroke="#4A6A94" stroke-width="1" fill="none" opacity="0.45"/><path d="M415.3 551.7 Q384.8 542.8 374.3 563.9" stroke="#4A6A94" stroke-width="1" fill="none" opacity="0.45"/><path d="M439.9 544.4 Q380.6 544.2 341.3 574.1" stroke="#4A6A94" stroke-width="1" fill="none" opacity="0.45"/><path d="M431.0 538.0 Q402.1 548.3 393.3 588.6" stroke="#4A6A94" stroke-width="1" fill="none" opacity="0.45"/><path d="M428.1 549.8 Q391.6 566.0 375.1 612.1" stroke="#4A6A94" stroke-width="1" fill="none" opacity="0.45"/><path d="M434.0 546.8 Q396.2 540.3 378.4 563.8" stroke="#4A6A94" stroke-width="1" fill="none" opacity="0.45"/><path d="M436.6 544.5 Q380.9 538.2 345.1 561.9" stroke="#4A6A94" stroke-width="1" fill="none" opacity="0.45"/><path d="M432.9 553.4 Q397.8 568.1 382.7 612.7" stroke="#4A6A94" stroke-width="1" fill="none" opacity="0.45"/><path d="M426.1 553.7 Q379.8 565.9 353.5 608.1" stroke="#4A6A94" stroke-width="1" fill="none" opacity="0.45"/><path d="M418.4 539.3 Q397.7 537.6 397.1 565.8" stroke="#4A6A94" stroke-width="1" fill="none" opacity="0.45"/><path d="M430.7 541.0 Q407.8 548.6 404.9 586.2" stroke="#4A6A94" stroke-width="1" fill="none" opacity="0.45"/><path d="M423.8 546.7 Q383.7 549.9 363.7 583.2" stroke="#4A6A94" stroke-width="1" fill="none" opacity="0.45"/><path d="M432.0 553.6 Q391.3 568.9 370.6 614.3" stroke="#4A6A94" stroke-width="1" fill="none" opacity="0.45"/><path d="M431.8 538.3 Q403.4 563.9 395.1 619.5" stroke="#4A6A94" stroke-width="1" fill="none" opacity="0.45"/>
    <!-- book -->
    <path d="M312 577 C360 560 400 545 430 542 C520 536 620 508 705 494 L705 590 C640 590 520 598 405 606 L318 612 Z" fill="#223F67"/>
    <path d="M411 542 C520 536 620 508 705 494" stroke="#17325D" stroke-width="3" fill="none" opacity="0.8"/>
    <path d="M405 606 C520 598 620 588 684 585 L705 600" stroke="#15305A" stroke-width="6" fill="none" opacity="0.7"/>
    <rect x="312" y="612" width="395" height="10" fill="#1A345F" opacity="0.7"/>
    <rect x="312" y="622" width="395" height="42" fill="#2A486C"/>
    </g>
  </svg></div>
  <!-- white band -->
  <div class="a" style="left:0;top:219px;width:383px;height:38px;background:#F6F6F8"></div>
  <div class="t" style="left:142px;top:178px;font-size:31px;font-weight:bold;color:#fff;-webkit-text-stroke:0.8px #fff">目</div>
  <div class="t" style="left:202px;top:178px;font-size:31px;font-weight:bold;color:#fff;-webkit-text-stroke:0.8px #fff">录</div>
  <div class="t" style="left:145px;top:227px;font-size:21px;color:#2A4877">Contents</div>

  <!-- dotted line -->
  <div class="a" style="left:503px;top:74px;width:275px;height:1px;background:repeating-linear-gradient(90deg,#7A7A7A 0 3px,transparent 3px 4.6px)"></div>

  <!-- rows -->
  <div class="a" style="left:428px;top:143.5px;width:40px;height:40px;border-radius:6px;background:#1F3E6B"><svg class="a" style="left:0;top:0" width="40" height="40" viewBox="0 0 40 40">
   <path d="M16 11h8a2.5 2.5 0 0 1 2.5 2.5v5.5M25.5 27.5v0.5a2 2 0 0 1-2 2h-9a2 2 0 0 1-2-2V15L16 11" fill="none" stroke="#fff" stroke-width="1.8" stroke-linejoin="round"/>
   <path d="M12.8 15.2L16.2 11.2V15.2z" fill="#fff"/>
   <path d="M18 15h6M16 18.5h7.5M16 22h4.5" stroke="#fff" stroke-width="1.4" opacity="0.85"/>
   <path d="M30.8 17.2a1.9 1.9 0 0 1 3 2.3l-7.6 9.6l-3-2.2z" fill="#fff"/>
   <path d="M23 27.3l2.9 2.1l-3.8 4.2z" fill="#fff"/>
   <path d="M22.9 27.1l3.1 2.3" stroke="#1F3E6B" stroke-width="0.9"/>
 </svg></div>
  <div class="a" style="left:544px;top:144.5px;width:259px;height:40px;background:#fff;border:1px solid #8391A6"></div>
  <div class="a" style="left:478px;top:143.5px;width:67px;height:41px;background:#1F3E6B"></div>
  <div class="t" style="left:491px;top:156.5px;font-size:14.5px;color:#fff;-webkit-text-stroke:0.25px #fff">Part 1</div>
  <div class="t" style="left:560px;top:157.8px;font-size:17.2px;font-weight:bold;color:#263F66;letter-spacing:0.6px;-webkit-text-stroke:0.5px #263F66">我的考试经历</div>
<div class="a" style="left:428px;top:198.3px;width:40px;height:40px;border-radius:6px;background:#1F3E6B"><svg class="a" style="left:0;top:0" width="40" height="40" viewBox="0 0 40 40">
   <path d="M20 12h-10v12l6 7h8v-9" fill="none" stroke="#fff" stroke-width="1.7"/>
   <path d="M10 24h6v7" fill="none" stroke="#fff" stroke-width="1.5"/>
   <path d="M12 15h6M12 18h7M12 21h6" stroke="#fff" stroke-width="1.3" opacity="0.85"/>
   <circle cx="22.5" cy="16" r="4" fill="none" stroke="#fff" stroke-width="1.6"/>
   <circle cx="22.5" cy="16" r="1.5" fill="#fff" opacity="0.7"/>
   <path d="M25.5 19l5 5" stroke="#fff" stroke-width="2"/>
 </svg></div>
  <div class="a" style="left:544px;top:199.3px;width:259px;height:40px;background:#fff;border:1px solid #8391A6"></div>
  <div class="a" style="left:478px;top:198.3px;width:67px;height:41px;background:#1F3E6B"></div>
  <div class="t" style="left:491px;top:211.3px;font-size:14.5px;color:#fff;-webkit-text-stroke:0.25px #fff">Part 2</div>
  <div class="t" style="left:560px;top:212.6px;font-size:17.2px;font-weight:bold;color:#263F66;letter-spacing:0.6px;-webkit-text-stroke:0.5px #263F66">公务员备考常见问题</div>
<div class="a" style="left:428px;top:253.0px;width:40px;height:40px;border-radius:6px;background:#1F3E6B"><svg class="a" style="left:0;top:0" width="40" height="40" viewBox="0 0 40 40">
   <path d="M20.5 13.5a6.5 6.5 0 0 1 4 11.6v2.4h-8v-2.4a6.5 6.5 0 0 1 4-11.6z" fill="#fff"/>
   <path d="M17 29h7M17.5 31h6" stroke="#fff" stroke-width="1.2"/>
   <path d="M20.5 6.5v4M7 19.5h4M30 19.5h4M11 10l3 3M30 10l-3 3M11 29l3-3M30 29l-3-3" stroke="#fff" stroke-width="1.6"/>
 </svg></div>
  <div class="a" style="left:544px;top:254.0px;width:259px;height:40px;background:#fff;border:1px solid #8391A6"></div>
  <div class="a" style="left:478px;top:253.0px;width:67px;height:41px;background:#1F3E6B"></div>
  <div class="t" style="left:491px;top:266.0px;font-size:14.5px;color:#fff;-webkit-text-stroke:0.25px #fff">Part 3</div>
  <div class="t" style="left:560px;top:267.3px;font-size:17.2px;font-weight:bold;color:#263F66;letter-spacing:0.6px;-webkit-text-stroke:0.5px #263F66">时间规划与方法实践</div>
<div class="a" style="left:428px;top:308.0px;width:40px;height:40px;border-radius:6px;background:#1F3E6B"><svg class="a" style="left:0;top:0" width="40" height="40" viewBox="0 0 40 40">
   <g fill="none" stroke="#fff" stroke-width="1.3" stroke-linejoin="round">
   <path d="M21.97 22.13 L21.75 23.36 L19.88 23.87 L19.39 24.71 L19.89 26.59 L18.93 27.40 L17.17 26.58 L16.25 26.91 L15.43 28.67 L14.17 28.67 L13.35 26.91 L12.43 26.58 L10.67 27.40 L9.71 26.59 L10.21 24.71 L9.72 23.87 L7.85 23.36 L7.63 22.13 L9.22 21.01 L9.39 20.05 L8.27 18.46 L8.90 17.37 L10.84 17.54 L11.59 16.91 L11.76 14.97 L12.94 14.55 L14.31 15.92 L15.29 15.92 L16.66 14.55 L17.84 14.97 L18.01 16.91 L18.76 17.54 L20.70 17.37 L21.33 18.46 L20.21 20.05 L20.38 21.01Z"/>
   <circle cx="14.8" cy="21.5" r="3.2"/>
   <path d="M23.87 13.47 L23.66 14.39 L22.41 14.70 L21.96 15.26 L21.93 16.56 L21.09 16.96 L20.06 16.18 L19.34 16.18 L18.31 16.96 L17.47 16.56 L17.44 15.26 L16.99 14.70 L15.74 14.39 L15.53 13.47 L16.52 12.64 L16.68 11.94 L16.14 10.77 L16.73 10.03 L18.00 10.29 L18.64 9.98 L19.23 8.83 L20.17 8.83 L20.76 9.98 L21.40 10.29 L22.67 10.03 L23.26 10.77 L22.72 11.94 L22.88 12.64Z"/>
   <circle cx="19.7" cy="13" r="1.5"/>
   <path d="M31.37 19.83 L31.17 20.87 L29.70 21.28 L29.25 21.96 L29.43 23.47 L28.55 24.06 L27.22 23.32 L26.41 23.48 L25.47 24.67 L24.43 24.47 L24.02 23.00 L23.34 22.55 L21.83 22.73 L21.24 21.85 L21.98 20.52 L21.82 19.71 L20.63 18.77 L20.83 17.73 L22.30 17.32 L22.75 16.64 L22.57 15.13 L23.45 14.54 L24.78 15.28 L25.59 15.12 L26.53 13.93 L27.57 14.13 L27.98 15.60 L28.66 16.05 L30.17 15.87 L30.76 16.75 L30.02 18.08 L30.18 18.89Z"/>
   <circle cx="26" cy="19.3" r="2.2"/>
   </g>
 </svg></div>
  <div class="a" style="left:544px;top:309.0px;width:259px;height:40px;background:#fff;border:1px solid #8391A6"></div>
  <div class="a" style="left:478px;top:308.0px;width:67px;height:41px;background:#1F3E6B"></div>
  <div class="t" style="left:491px;top:321.0px;font-size:14.5px;color:#fff;-webkit-text-stroke:0.25px #fff">Part 4</div>
  <div class="t" style="left:560px;top:322.3px;font-size:17.2px;font-weight:bold;color:#263F66;letter-spacing:0.6px;-webkit-text-stroke:0.5px #263F66">提问与答疑</div>

</div>


<!-- ===== left panel ===== -->
<div class="a" style="left:228px;top:173px;width:1px;height:496px;background:#D4D4D4"></div>
<div class="a" style="left:209px;top:175px;width:17px;height:494px;background:#DCDCDC"></div>
<div class="a" style="left:209px;top:175px;width:17px;height:17px;background:#fff;border:1px solid #C8C8C8"></div>
<div class="a" style="left:214px;top:181px;width:0;height:0;border-left:3.5px solid transparent;border-right:3.5px solid transparent;border-bottom:4px solid #666"></div>
<div class="a" style="left:209px;top:191px;width:17px;height:117px;background:#fff;border:1px solid #C8C8C8"></div>
<div class="a" style="left:209px;top:653px;width:17px;height:16px;background:#fff;border:1px solid #C8C8C8"></div>
<div class="a" style="left:214px;top:659px;width:0;height:0;border-left:3.5px solid transparent;border-right:3.5px solid transparent;border-top:4px solid #666"></div>

<svg class="a" style="left:12px;top:191px" width="8" height="13" viewBox="0 0 8 13"><path d="M5.2 0.5V12.2" stroke="#5A5A5A" stroke-width="1.4"/><path d="M5.2 0.8C4.2 2.4 2.8 3.5 1 4.2" stroke="#5A5A5A" stroke-width="1.3" fill="none"/></svg>
<div class="t" style="left:12px;top:298px;font-size:16px;color:#C43E1C">2</div>
<div class="t" style="left:12px;top:405px;font-size:16px;color:#555">3</div>
<div class="t" style="left:12px;top:513px;font-size:16px;color:#555">4</div>
<div class="t" style="left:12px;top:620px;font-size:16px;color:#555">5</div>


<svg class="a" style="left:10px;top:206px" width="12" height="12" viewBox="0 0 12 12"><path d="M6.5 1l1.4 3.4l3.6 0.3l-2.8 2.3l0.9 3.5l-3.1-1.9l-3.1 1.9l0.9-3.5l-2.8-2.3l3.6-0.3z" fill="#6A6A6A"/><path d="M0.5 2h2M0.5 8.5h2" stroke="#888" stroke-width="0.8"/></svg>
<svg class="a" style="left:10px;top:314px" width="12" height="12" viewBox="0 0 12 12"><path d="M6.5 1l1.4 3.4l3.6 0.3l-2.8 2.3l0.9 3.5l-3.1-1.9l-3.1 1.9l0.9-3.5l-2.8-2.3l3.6-0.3z" fill="#6A6A6A"/><path d="M0.5 2h2M0.5 8.5h2" stroke="#888" stroke-width="0.8"/></svg>
<svg class="a" style="left:10px;top:422px" width="12" height="12" viewBox="0 0 12 12"><path d="M6.5 1l1.4 3.4l3.6 0.3l-2.8 2.3l0.9 3.5l-3.1-1.9l-3.1 1.9l0.9-3.5l-2.8-2.3l3.6-0.3z" fill="#6A6A6A"/><path d="M0.5 2h2M0.5 8.5h2" stroke="#888" stroke-width="0.8"/></svg>
<svg class="a" style="left:10px;top:529px" width="12" height="12" viewBox="0 0 12 12"><path d="M6.5 1l1.4 3.4l3.6 0.3l-2.8 2.3l0.9 3.5l-3.1-1.9l-3.1 1.9l0.9-3.5l-2.8-2.3l3.6-0.3z" fill="#6A6A6A"/><path d="M0.5 2h2M0.5 8.5h2" stroke="#888" stroke-width="0.8"/></svg>
<svg class="a" style="left:10px;top:637px" width="12" height="12" viewBox="0 0 12 12"><path d="M6.5 1l1.4 3.4l3.6 0.3l-2.8 2.3l0.9 3.5l-3.1-1.9l-3.1 1.9l0.9-3.5l-2.8-2.3l3.6-0.3z" fill="#6A6A6A"/><path d="M0.5 2h2M0.5 8.5h2" stroke="#888" stroke-width="0.8"/></svg>
<!-- thumb 1 -->
<div class="a" style="left:37px;top:194px;width:152px;height:85px;overflow:hidden;background:linear-gradient(180deg,#1F3D6A 0%,#234370 70%,#2A4A74 92%,#3E5C84 100%);box-shadow:0 1px 1px rgba(0,0,0,0.15)">
  <svg class="a" style="left:0;top:0" width="152" height="85" viewBox="0 0 152 85">
    <path d="M30 80 L60 20 L120 15 L140 70 Z" fill="#2A4A76" opacity="0.35"/>
    <path d="M61 10.5L77 5l16 5.5l-16 5.5z" fill="#fff"/>
    <path d="M66 13.5v6c4 3 18 3 22 0v-6l-11 4z" fill="#fff"/>
    <path d="M92 11v12" stroke="#fff" stroke-width="0.8"/><rect x="91" y="19" width="2" height="5" fill="#fff"/>
    <path d="M15 27.8h123M15 41.8h123" stroke="#C8D0DC" stroke-width="0.8" stroke-dasharray="1.2 0.9" opacity="0.75"/>
    <rect x="64" y="47" width="20" height="2.5" fill="#fff" opacity="0.45"/><rect x="89" y="47" width="22" height="2.5" fill="#fff" opacity="0.45"/>
    <g fill="#fff" opacity="0.42">
      <rect x="34" y="57.5" width="69" height="1.6"/><rect x="34" y="60" width="55" height="1.6"/>
      <rect x="34" y="62.8" width="70" height="1.6"/><rect x="36" y="65.5" width="48" height="1.6"/>
      <rect x="34" y="68.8" width="70" height="1.6"/>
    </g>
  </svg>
  <div class="t" style="left:34px;top:30.5px;font-size:9px;font-weight:bold;color:#fff;letter-spacing:0.6px">志有定向&nbsp;&nbsp;&nbsp;一战成公</div>
</div>

<!-- thumb 2 border -->
<div class="a" style="left:34px;top:298px;width:158px;height:92px;border:3px solid #7A1B1B;background:#fff"></div>
<div class="a" style="left:37px;top:301px;width:152px;height:86px;overflow:hidden"><div class="a" style="left:0;top:0;width:846px;height:476px;transform:scale(0.17967,0.18067);transform-origin:0 0"><div class="a" style="left:0;top:0;width:846px;height:476px;background:#F8F7F9;overflow:hidden">
  <div class="a" style="left:0;top:0;width:383px;height:476px;overflow:hidden"><svg class="a" style="left:-6px;top:-6px;filter:blur(1.2px)" width="395" height="488" viewBox="312 176 395 488">
    <defs>
      <radialGradient id="bg1b" cx="0.55" cy="0.3" r="0.8">
        <stop offset="0" stop-color="#203F67"/><stop offset="1" stop-color="#16335B"/>
      </radialGradient>
      <linearGradient id="capgb" x1="0" y1="0" x2="1" y2="0">
        <stop offset="0" stop-color="#1B3863"/><stop offset="1" stop-color="#122F59"/>
      </linearGradient>
      <filter id="bl" x="-5%" y="-5%" width="110%" height="110%"><feGaussianBlur stdDeviation="1.5"/></filter>
    </defs>
    <rect x="312" y="176" width="395" height="488" fill="url(#bg1b)"/>
    <g>
    <!-- board surface -->
    <path d="M447 349 C470 330 485 318 497 313 C520 300 545 285 565 277 C590 262 610 245 626 233 C650 217 670 203 685 199 L705 197 L705 345 L596 342 L447 350 Z" fill="url(#capgb)"/>
    <path d="M447 349 C470 330 485 318 497 313 C520 300 545 285 565 277 C590 262 610 245 626 233 C650 217 670 203 685 199 L702 197" stroke="#16305B" stroke-width="2" fill="none" opacity="0.7"/>
    <!-- cap body -->
    <path d="M596 314 L706 314 L706 544 L578 544 L580 440 Z" fill="#13305A"/>
    <path d="M594 314 L612 314 L606 544 L576 544 L578 440 Z" fill="#21406A"/>
    <!-- tassel -->
    <path d="M497 314 C494 380 490 440 482 490 C476 520 466 538 450 548" stroke="#17325D" stroke-width="7" fill="none" opacity="0.75"/>
    <path d="M455 545 C420 550 380 560 340 590" stroke="#3B5A84" stroke-width="14" fill="none" opacity="0.2"/><path d="M424.2 547.1 Q371.8 554.9 339.4 592.7" stroke="#4A6A94" stroke-width="1" fill="none" opacity="0.45"/><path d="M415.3 551.7 Q384.8 542.8 374.3 563.9" stroke="#4A6A94" stroke-width="1" fill="none" opacity="0.45"/><path d="M439.9 544.4 Q380.6 544.2 341.3 574.1" stroke="#4A6A94" stroke-width="1" fill="none" opacity="0.45"/><path d="M431.0 538.0 Q402.1 548.3 393.3 588.6" stroke="#4A6A94" stroke-width="1" fill="none" opacity="0.45"/><path d="M428.1 549.8 Q391.6 566.0 375.1 612.1" stroke="#4A6A94" stroke-width="1" fill="none" opacity="0.45"/><path d="M434.0 546.8 Q396.2 540.3 378.4 563.8" stroke="#4A6A94" stroke-width="1" fill="none" opacity="0.45"/><path d="M436.6 544.5 Q380.9 538.2 345.1 561.9" stroke="#4A6A94" stroke-width="1" fill="none" opacity="0.45"/><path d="M432.9 553.4 Q397.8 568.1 382.7 612.7" stroke="#4A6A94" stroke-width="1" fill="none" opacity="0.45"/><path d="M426.1 553.7 Q379.8 565.9 353.5 608.1" stroke="#4A6A94" stroke-width="1" fill="none" opacity="0.45"/><path d="M418.4 539.3 Q397.7 537.6 397.1 565.8" stroke="#4A6A94" stroke-width="1" fill="none" opacity="0.45"/><path d="M430.7 541.0 Q407.8 548.6 404.9 586.2" stroke="#4A6A94" stroke-width="1" fill="none" opacity="0.45"/><path d="M423.8 546.7 Q383.7 549.9 363.7 583.2" stroke="#4A6A94" stroke-width="1" fill="none" opacity="0.45"/><path d="M432.0 553.6 Q391.3 568.9 370.6 614.3" stroke="#4A6A94" stroke-width="1" fill="none" opacity="0.45"/><path d="M431.8 538.3 Q403.4 563.9 395.1 619.5" stroke="#4A6A94" stroke-width="1" fill="none" opacity="0.45"/>
    <!-- book -->
    <path d="M312 577 C360 560 400 545 430 542 C520 536 620 508 705 494 L705 590 C640 590 520 598 405 606 L318 612 Z" fill="#223F67"/>
    <path d="M411 542 C520 536 620 508 705 494" stroke="#17325D" stroke-width="3" fill="none" opacity="0.8"/>
    <path d="M405 606 C520 598 620 588 684 585 L705 600" stroke="#15305A" stroke-width="6" fill="none" opacity="0.7"/>
    <rect x="312" y="612" width="395" height="10" fill="#1A345F" opacity="0.7"/>
    <rect x="312" y="622" width="395" height="42" fill="#2A486C"/>
    </g>
  </svg></div>
  <!-- white band -->
  <div class="a" style="left:0;top:219px;width:383px;height:38px;background:#F6F6F8"></div>
  <div class="t" style="left:142px;top:178px;font-size:31px;font-weight:bold;color:#fff;-webkit-text-stroke:0.8px #fff">目</div>
  <div class="t" style="left:202px;top:178px;font-size:31px;font-weight:bold;color:#fff;-webkit-text-stroke:0.8px #fff">录</div>
  <div class="t" style="left:145px;top:227px;font-size:21px;color:#2A4877">Contents</div>

  <!-- dotted line -->
  <div class="a" style="left:503px;top:74px;width:275px;height:1px;background:repeating-linear-gradient(90deg,#7A7A7A 0 3px,transparent 3px 4.6px)"></div>

  <!-- rows -->
  <div class="a" style="left:428px;top:143.5px;width:40px;height:40px;border-radius:6px;background:#1F3E6B"><svg class="a" style="left:0;top:0" width="40" height="40" viewBox="0 0 40 40">
   <path d="M16 11h8a2.5 2.5 0 0 1 2.5 2.5v5.5M25.5 27.5v0.5a2 2 0 0 1-2 2h-9a2 2 0 0 1-2-2V15L16 11" fill="none" stroke="#fff" stroke-width="1.8" stroke-linejoin="round"/>
   <path d="M12.8 15.2L16.2 11.2V15.2z" fill="#fff"/>
   <path d="M18 15h6M16 18.5h7.5M16 22h4.5" stroke="#fff" stroke-width="1.4" opacity="0.85"/>
   <path d="M30.8 17.2a1.9 1.9 0 0 1 3 2.3l-7.6 9.6l-3-2.2z" fill="#fff"/>
   <path d="M23 27.3l2.9 2.1l-3.8 4.2z" fill="#fff"/>
   <path d="M22.9 27.1l3.1 2.3" stroke="#1F3E6B" stroke-width="0.9"/>
 </svg></div>
  <div class="a" style="left:544px;top:144.5px;width:259px;height:40px;background:#fff;border:5px solid #8391A6"></div>
  <div class="a" style="left:478px;top:143.5px;width:67px;height:41px;background:#1F3E6B"></div>
  <div class="t" style="left:491px;top:156.5px;font-size:14.5px;color:#fff;-webkit-text-stroke:0.25px #fff">Part 1</div>
  <div class="t" style="left:560px;top:157.8px;font-size:17.2px;font-weight:bold;color:#263F66;letter-spacing:0.6px;-webkit-text-stroke:0.5px #263F66">我的考试经历</div>
<div class="a" style="left:428px;top:198.3px;width:40px;height:40px;border-radius:6px;background:#1F3E6B"><svg class="a" style="left:0;top:0" width="40" height="40" viewBox="0 0 40 40">
   <path d="M20 12h-10v12l6 7h8v-9" fill="none" stroke="#fff" stroke-width="1.7"/>
   <path d="M10 24h6v7" fill="none" stroke="#fff" stroke-width="1.5"/>
   <path d="M12 15h6M12 18h7M12 21h6" stroke="#fff" stroke-width="1.3" opacity="0.85"/>
   <circle cx="22.5" cy="16" r="4" fill="none" stroke="#fff" stroke-width="1.6"/>
   <circle cx="22.5" cy="16" r="1.5" fill="#fff" opacity="0.7"/>
   <path d="M25.5 19l5 5" stroke="#fff" stroke-width="2"/>
 </svg></div>
  <div class="a" style="left:544px;top:199.3px;width:259px;height:40px;background:#fff;border:5px solid #8391A6"></div>
  <div class="a" style="left:478px;top:198.3px;width:67px;height:41px;background:#1F3E6B"></div>
  <div class="t" style="left:491px;top:211.3px;font-size:14.5px;color:#fff;-webkit-text-stroke:0.25px #fff">Part 2</div>
  <div class="t" style="left:560px;top:212.6px;font-size:17.2px;font-weight:bold;color:#263F66;letter-spacing:0.6px;-webkit-text-stroke:0.5px #263F66">公务员备考常见问题</div>
<div class="a" style="left:428px;top:253.0px;width:40px;height:40px;border-radius:6px;background:#1F3E6B"><svg class="a" style="left:0;top:0" width="40" height="40" viewBox="0 0 40 40">
   <path d="M20.5 13.5a6.5 6.5 0 0 1 4 11.6v2.4h-8v-2.4a6.5 6.5 0 0 1 4-11.6z" fill="#fff"/>
   <path d="M17 29h7M17.5 31h6" stroke="#fff" stroke-width="1.2"/>
   <path d="M20.5 6.5v4M7 19.5h4M30 19.5h4M11 10l3 3M30 10l-3 3M11 29l3-3M30 29l-3-3" stroke="#fff" stroke-width="1.6"/>
 </svg></div>
  <div class="a" style="left:544px;top:254.0px;width:259px;height:40px;background:#fff;border:5px solid #8391A6"></div>
  <div class="a" style="left:478px;top:253.0px;width:67px;height:41px;background:#1F3E6B"></div>
  <div class="t" style="left:491px;top:266.0px;font-size:14.5px;color:#fff;-webkit-text-stroke:0.25px #fff">Part 3</div>
  <div class="t" style="left:560px;top:267.3px;font-size:17.2px;font-weight:bold;color:#263F66;letter-spacing:0.6px;-webkit-text-stroke:0.5px #263F66">时间规划与方法实践</div>
<div class="a" style="left:428px;top:308.0px;width:40px;height:40px;border-radius:6px;background:#1F3E6B"><svg class="a" style="left:0;top:0" width="40" height="40" viewBox="0 0 40 40">
   <g fill="none" stroke="#fff" stroke-width="1.3" stroke-linejoin="round">
   <path d="M21.97 22.13 L21.75 23.36 L19.88 23.87 L19.39 24.71 L19.89 26.59 L18.93 27.40 L17.17 26.58 L16.25 26.91 L15.43 28.67 L14.17 28.67 L13.35 26.91 L12.43 26.58 L10.67 27.40 L9.71 26.59 L10.21 24.71 L9.72 23.87 L7.85 23.36 L7.63 22.13 L9.22 21.01 L9.39 20.05 L8.27 18.46 L8.90 17.37 L10.84 17.54 L11.59 16.91 L11.76 14.97 L12.94 14.55 L14.31 15.92 L15.29 15.92 L16.66 14.55 L17.84 14.97 L18.01 16.91 L18.76 17.54 L20.70 17.37 L21.33 18.46 L20.21 20.05 L20.38 21.01Z"/>
   <circle cx="14.8" cy="21.5" r="3.2"/>
   <path d="M23.87 13.47 L23.66 14.39 L22.41 14.70 L21.96 15.26 L21.93 16.56 L21.09 16.96 L20.06 16.18 L19.34 16.18 L18.31 16.96 L17.47 16.56 L17.44 15.26 L16.99 14.70 L15.74 14.39 L15.53 13.47 L16.52 12.64 L16.68 11.94 L16.14 10.77 L16.73 10.03 L18.00 10.29 L18.64 9.98 L19.23 8.83 L20.17 8.83 L20.76 9.98 L21.40 10.29 L22.67 10.03 L23.26 10.77 L22.72 11.94 L22.88 12.64Z"/>
   <circle cx="19.7" cy="13" r="1.5"/>
   <path d="M31.37 19.83 L31.17 20.87 L29.70 21.28 L29.25 21.96 L29.43 23.47 L28.55 24.06 L27.22 23.32 L26.41 23.48 L25.47 24.67 L24.43 24.47 L24.02 23.00 L23.34 22.55 L21.83 22.73 L21.24 21.85 L21.98 20.52 L21.82 19.71 L20.63 18.77 L20.83 17.73 L22.30 17.32 L22.75 16.64 L22.57 15.13 L23.45 14.54 L24.78 15.28 L25.59 15.12 L26.53 13.93 L27.57 14.13 L27.98 15.60 L28.66 16.05 L30.17 15.87 L30.76 16.75 L30.02 18.08 L30.18 18.89Z"/>
   <circle cx="26" cy="19.3" r="2.2"/>
   </g>
 </svg></div>
  <div class="a" style="left:544px;top:309.0px;width:259px;height:40px;background:#fff;border:5px solid #8391A6"></div>
  <div class="a" style="left:478px;top:308.0px;width:67px;height:41px;background:#1F3E6B"></div>
  <div class="t" style="left:491px;top:321.0px;font-size:14.5px;color:#fff;-webkit-text-stroke:0.25px #fff">Part 4</div>
  <div class="t" style="left:560px;top:322.3px;font-size:17.2px;font-weight:bold;color:#263F66;letter-spacing:0.6px;-webkit-text-stroke:0.5px #263F66">提问与答疑</div>

</div></div></div>

<!-- thumb 3 -->
<div class="a" style="left:37px;top:409px;width:152px;height:86px;overflow:hidden;background:linear-gradient(135deg,#1D3B68,#254570)">
  <svg class="a" style="left:0;top:0" width="152" height="86" viewBox="0 0 152 86">
    <path d="M25 30 L75 8 L125 22 L110 70 L40 72 Z" fill="#18335E" opacity="0.35"/>
    <path d="M0 68 C40 62 60 70 76 66 C95 70 120 62 152 68 L152 86 L0 86z" fill="#2A4872" opacity="0.6"/>
    <path d="M10 70 C40 64 60 72 76 68 C95 72 120 64 145 70" stroke="#17315C" stroke-width="1.2" fill="none" opacity="0.7"/><path d="M30 66 C50 58 65 62 76 64 C88 62 105 58 125 66 L120 72 C100 68 88 70 76 72 C64 70 50 68 35 72z" fill="#2E4D77" opacity="0.7"/>
  </svg>
  <div class="a" style="left:50px;top:8px;width:52px;height:52px;border-radius:50%;background:#fff"></div>
  <svg class="a" style="left:68px;top:10px" width="16" height="16" viewBox="0 0 16 16">
    <path d="M4.5 1.5h5v4M9.5 10.5v3h-7v-9l2-3" fill="none" stroke="#2B4A77" stroke-width="1.6"/><path d="M5 5h3M5 7.5h3" stroke="#2B4A77" stroke-width="1"/>
    <path d="M14.5 4.5l-5 6.5l-1.5 3l2.5-2l5-6.5z" fill="#2B4A77"/>
  </svg>
  <div class="a" style="left:70px;top:30px;width:12px;height:2px;background:#C0C0C0"></div>
  <div class="a" style="left:52px;top:34.3px;width:48px;height:1px;background:#666"></div>
  <div class="t" style="left:60.5px;top:40px;font-size:5.5px;font-weight:bold;color:#333;transform:scale(1.1);transform-origin:0 0">我的考试经历</div>
</div>

<!-- thumb 4 -->
<div class="a" style="left:37px;top:516.5px;width:152px;height:86px;overflow:hidden;background:linear-gradient(180deg,#F6F6F7,#E8E9EB)">
  <svg class="a" style="left:0;top:0" width="152" height="86" viewBox="0 0 152 86">
    <circle cx="6" cy="7.5" r="1.2" fill="#2B4A77"/><circle cx="9" cy="5" r="1" fill="#2B4A77"/><circle cx="6.5" cy="10.5" r="1.2" fill="#2B4A77"/><path d="M6 7.5L9 5M9 5l2 1.5" stroke="#2B4A77" stroke-width="0.7"/>
    <rect x="12" y="5" width="29" height="2.6" fill="#444" opacity="0.45"/>
    <circle cx="22.5" cy="24" r="5.5" fill="#3B6AB5"/><circle cx="22.5" cy="24" r="3" fill="#fff" opacity="0.5"/>
    <path d="M19 29l-2 6l3-1.5l1.5 1.5l1-5M26 29l2 6l-3-1.5l-1.5 1.5" fill="#3B6AB5"/>
    <circle cx="22.5" cy="59" r="5.5" fill="none" stroke="#3B6AB5" stroke-width="1.1"/>
    <path d="M22.5 56v6M19.5 59h6" stroke="#3B6AB5" stroke-width="1.1"/>
    <path d="M20 65h5M20.5 67h4M21 69h3" stroke="#3B6AB5" stroke-width="1"/>
    <path d="M15 54l-1.5-1M30 54l1.5-1M22.5 51v-2" stroke="#3B6AB5" stroke-width="0.8"/>
    <path d="M34.6 13.5V45M34.6 48V69.5" stroke="#444" stroke-width="1.2"/>
    <g fill="#2B4A77"><circle cx="40.5" cy="16.8" r="2"/><circle cx="40.5" cy="24.8" r="2"/><circle cx="40.5" cy="33.7" r="2"/><circle cx="40.5" cy="41.5" r="2"/><circle cx="40.5" cy="50" r="2"/><circle cx="40.5" cy="60" r="2"/></g>
    <g fill="#8A8A8A" opacity="0.3">
      <rect x="44" y="16" width="15" height="1.5"/><rect x="72" y="16" width="50" height="1.5"/>
      <rect x="44" y="24" width="14" height="1.5"/><rect x="72" y="24" width="20" height="1.5"/>
      <rect x="44" y="33" width="17" height="1.5"/><rect x="73" y="33" width="55" height="1.5"/>
      <rect x="44" y="40.8" width="22" height="1.5"/><rect x="73" y="40.8" width="20" height="1.5"/>
      <rect x="44" y="49.3" width="15" height="1.5"/><rect x="73" y="49.3" width="18" height="1.5"/>
      <rect x="44" y="59.3" width="22" height="1.5"/><rect x="73" y="59.3" width="50" height="1.5"/><rect x="75" y="63" width="15" height="1.5"/>
    </g>
    <rect x="0" y="84" width="152" height="2" fill="#1F3E6B"/>
    <rect x="145" y="81" width="5" height="4" fill="#1F3E6B"/>
  </svg>
</div>

<!-- thumb 5 -->
<div class="a" style="left:37px;top:624px;width:152px;height:45px;overflow:hidden;background:linear-gradient(180deg,#F6F6F7,#EBECEE)">
  <svg class="a" style="left:0;top:0" width="152" height="45" viewBox="0 0 152 45">
    <circle cx="6" cy="7.5" r="1.2" fill="#2B4A77"/><circle cx="9" cy="5" r="1" fill="#2B4A77"/><circle cx="6.5" cy="10.5" r="1.2" fill="#2B4A77"/><path d="M6 7.5L9 5M9 5l2 1.5" stroke="#2B4A77" stroke-width="0.7"/>
    <rect x="12" y="5" width="9" height="2.6" fill="#444" opacity="0.45"/>
    <circle cx="21.5" cy="23.5" r="5.7" fill="#1F3E6B"/>
    <path d="M31 21.5l2.5 2l-2.5 2z" fill="#1F3E6B"/>
    <rect x="35" y="19" width="55" height="1.8" fill="#777" opacity="0.5"/>
    <rect x="33" y="23.5" width="108" height="1.3" fill="#999"/>
    <circle cx="35.5" cy="44" r="5.7" fill="#1F3E6B"/>
    <path d="M45 42l2.5 2l-2.5 2z" fill="#1F3E6B"/>
    <rect x="49" y="40" width="56" height="1.8" fill="#777" opacity="0.5"/>
  </svg>
  <div class="t" style="left:18.5px;top:20px;font-size:6px;font-weight:bold;color:#fff">01</div>
</div>

<!-- ===== right scrollbar ===== -->
<div class="a" style="left:1252px;top:175px;width:17px;height:494px;background:#DCDCDC"></div>
<div class="a" style="left:1252px;top:175px;width:17px;height:17px;background:#fff;border:1px solid #C8C8C8"></div>
<div class="a" style="left:1257px;top:181px;width:0;height:0;border-left:3.5px solid transparent;border-right:3.5px solid transparent;border-bottom:4px solid #666"></div>
<div class="a" style="left:1252px;top:214px;width:17px;height:22px;background:#fff;border:1px solid #C8C8C8"></div>
<div class="a" style="left:1252px;top:597px;width:17px;height:17px;background:#fff;border:1px solid #C8C8C8"></div>
<div class="a" style="left:1257px;top:604px;width:0;height:0;border-left:3.5px solid transparent;border-right:3.5px solid transparent;border-top:4px solid #666"></div>
<svg class="a" style="left:1255px;top:618px" width="10" height="26" viewBox="0 0 10 26">
  <path d="M1 4.5L5 1l4 3.5zM1 9L5 5.5L9 9z" fill="#555"/><path d="M1 7h8" stroke="#555" stroke-width="0" />
  <path d="M1 17L5 20.5L9 17zM1 21.5L5 25L9 21.5z" fill="#555"/>
</svg>

<!-- ===== status bar ===== -->
<div class="t" style="left:7px;top:676px;font-size:12px;color:#555">幻灯片 第 2 张，共 18 张</div>
<svg class="a" style="left:158px;top:674px" width="14" height="13" viewBox="0 0 14 13">
  <path d="M0.5 0.5h6v12h-6zM6.5 0.5h4M6.5 12.5h6V7" fill="none" stroke="#777" stroke-width="1"/>
  <path d="M8 6l2 2.5l3.5-5" fill="none" stroke="#777" stroke-width="1.1"/>
</svg>
<div class="t" style="left:189px;top:676px;font-size:12px;color:#555">中文(中国)</div>

<svg class="a" style="left:795px;top:675px" width="13" height="11" viewBox="0 0 13 11"><path d="M6.5 0.5L3.5 3.5h6z" fill="#777"/><path d="M0.5 5.5h12M0.5 8h12M0.5 10.5h12" stroke="#888" stroke-width="1"/></svg>
<div class="t" style="left:811px;top:675px;font-size:12.5px;color:#444">备注</div>
<svg class="a" style="left:854px;top:674px" width="14" height="14" viewBox="0 0 14 14"><path d="M0.5 0.5h13v9h-9l-3.5 3.5v-3.5h-0.5z" fill="#555"/></svg>
<div class="t" style="left:871px;top:675px;font-size:12.5px;color:#444">批注</div>
<div class="a" style="left:913px;top:670px;width:39px;height:22px;background:#C8C8C8"></div>
<svg class="a" style="left:925px;top:674px" width="15" height="13" viewBox="0 0 15 13"><path d="M0.5 0.5h14v12h-14zM3.5 0.5v12M3.5 9.5h11" fill="none" stroke="#777" stroke-width="1"/><path d="M7 3h4v3.5h-4z" fill="none" stroke="#777" stroke-width="0.9"/></svg>
<svg class="a" style="left:964px;top:674px" width="15" height="13" viewBox="0 0 15 13"><path d="M0.5 0.5h6v5h-6zM8.5 0.5h6v5h-6zM0.5 7.5h6v5h-6zM8.5 7.5h6v5h-6z" fill="none" stroke="#888" stroke-width="1"/></svg>
<svg class="a" style="left:1004px;top:674px" width="15" height="13" viewBox="0 0 15 13"><path d="M0.5 0.5h14v12h-14zM7.5 0.5v12M2.5 3h3M2.5 5.5h3M2.5 8h3M9.5 3h3M9.5 5.5h3M9.5 8h3" fill="none" stroke="#888" stroke-width="1"/></svg>
<svg class="a" style="left:1044px;top:673px" width="15" height="15" viewBox="0 0 15 15"><path d="M0.5 0.5h14M2 0.5v8h11v-8M7.5 8.5v3M4.5 14l3-2.5l3 2.5" fill="none" stroke="#888" stroke-width="1"/><path d="M5 3.5h5v3h-5z" fill="none" stroke="#999" stroke-width="0.8"/></svg>
<div class="a" style="left:1076px;top:680px;width:8px;height:1.3px;background:#555"></div>
<div class="a" style="left:1090px;top:680px;width:97px;height:1px;background:#AAA"></div>
<div class="a" style="left:1119px;top:675px;width:5px;height:12px;background:#666"></div>
<div class="a" style="left:1136px;top:677px;width:1px;height:6px;background:#AAA"></div>
<div class="a" style="left:1192px;top:680px;width:10px;height:1.3px;background:#555"></div>
<div class="a" style="left:1196.5px;top:675.5px;width:1.3px;height:10px;background:#555"></div>
<div class="t" style="left:1212px;top:674px;font-size:13px;color:#444">67%</div>
<svg class="a" style="left:1252px;top:675px" width="11" height="11" viewBox="0 0 11 11"><path d="M0.5 0.5h10v10h-10z" fill="none" stroke="#999" stroke-width="1"/><path d="M2.5 2.5l2 2M8.5 2.5l-2 2M2.5 8.5l2-2M8.5 8.5l-2-2" stroke="#888" stroke-width="1"/></svg>

<!-- ===== overlays ===== -->
<div class="a" style="left:596px;top:644px;width:77px;height:30px;border-radius:15px;background:rgba(20,20,20,0.45)"></div>
<div class="t" style="left:616px;top:650px;font-size:19px;color:#F4F4F4">1/16</div>
<div class="a" style="left:1020px;top:551.5px;width:91px;height:91px;border-radius:50%;background:#7E7F80"></div>
<svg class="a" style="left:1040px;top:568px" width="50" height="56" viewBox="0 0 50 56">
  <rect x="16" y="4" width="19" height="36" rx="9.5" fill="#fff"/>
  <path d="M9 27c0 11 7 17 16.5 17S42 38 42 27" fill="none" stroke="#fff" stroke-width="3" stroke-linecap="round"/>
  <path d="M25.5 44v8M15 52.5h21" stroke="#fff" stroke-width="3" stroke-linecap="round"/>
  <path d="M6 48L44 9.5" stroke="#7E7F80" stroke-width="5"/>
  <path d="M6 48L44 9.5" stroke="#E99890" stroke-width="3" stroke-linecap="round"/>
</svg>
<!-- text cursor -->
<svg class="a" style="left:971px;top:329px" width="9" height="18" viewBox="0 0 9 18"><path d="M1 1h7M4.5 1v16M1 17h7" stroke="#222" stroke-width="1.2" fill="none"/></svg>

</body>
</html>
